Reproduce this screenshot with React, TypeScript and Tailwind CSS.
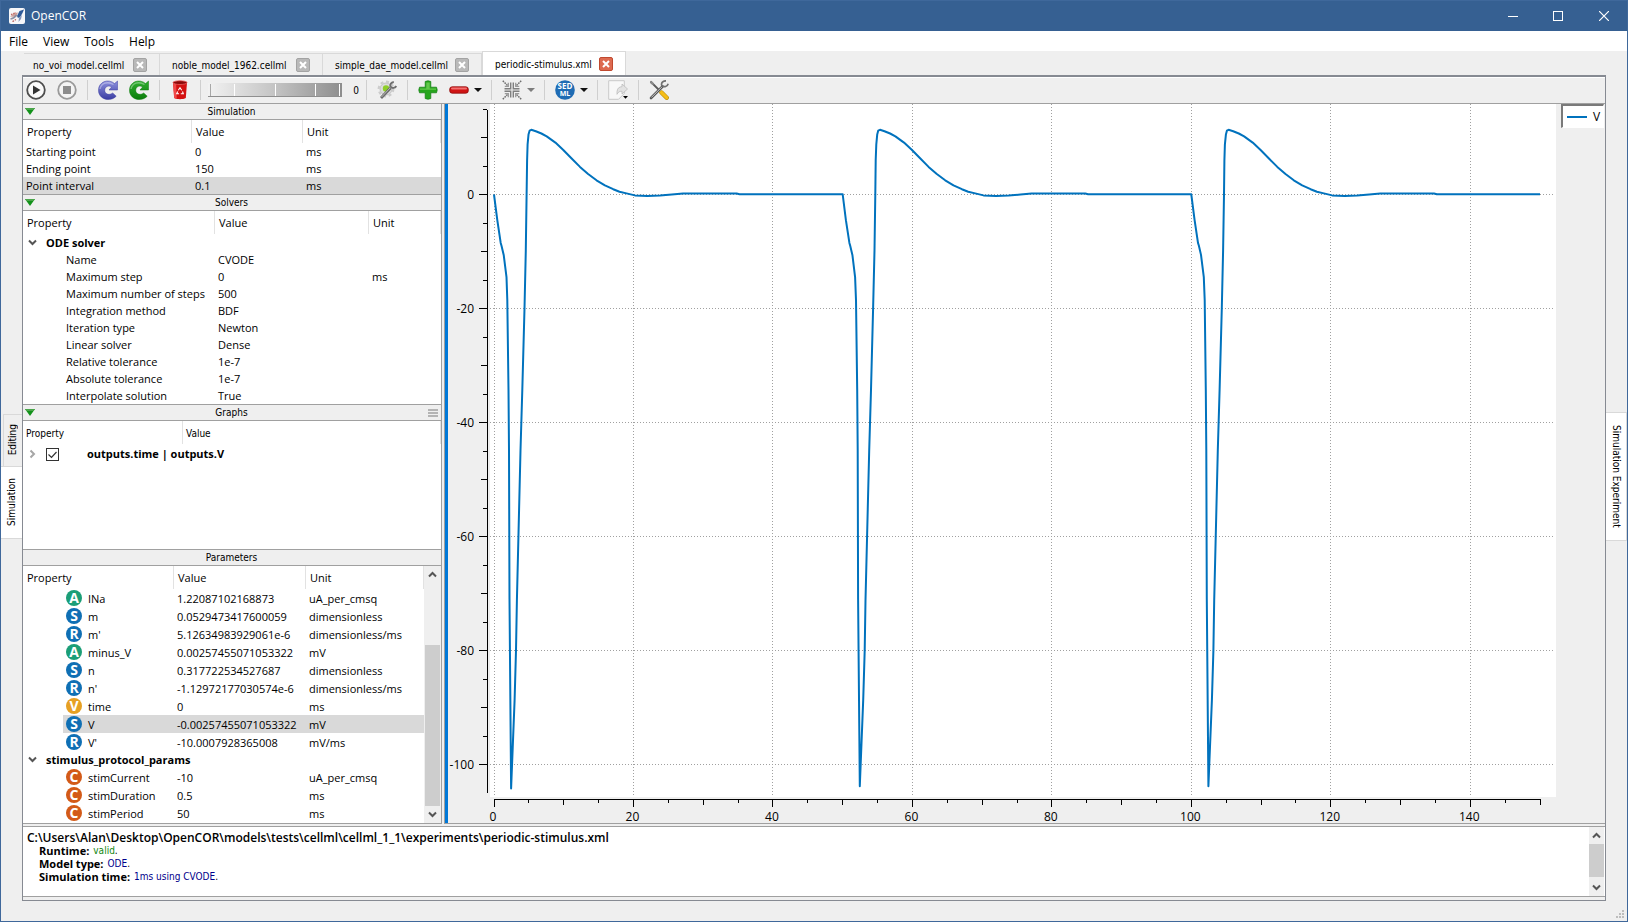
import { useLayoutEffect, useRef, useState } from "react";
import type { ReactNode } from "react";

/* ------------------------------------------------------------------ icons */

const AppIcon = () => (
  <svg className="size-4" viewBox="0 0 16 16" aria-hidden="true">
    <rect width="16" height="16" rx="2" fill="#f7f7f9" />
    <path d="M1 8.500c2.500-2.500 4.500-3.500 8-4L7 9z" fill="#cfa09b" />
    <path d="M1.500 11c2.500-.5 4.500-1.500 6-4" stroke="#8b8fa3" strokeWidth="1.600" fill="none" />
    <path d="M3.500 13.500c1.500-.5 2.500-1.200 3.500-2.300M2 6.500l5-2" stroke="#b7524c" strokeWidth="1.200" strokeDasharray="1.500 1" fill="none" />
    <path d="M15 1.500L10.500 3 8 8l1 2 2.500-1.500L13.500 5z" fill="#2f5a98" />
    <path d="M10 9.500l-.5 4.500 2.500-3 1-4z" fill="#8496bd" />
  </svg>
);

const PlayIcon = () => (
  <svg className="size-5 shrink-0" viewBox="0 0 20 20" aria-hidden="true">
    <circle cx="10" cy="10" r="8.800" fill="#fafafa" stroke="#4e4e4e" strokeWidth="1.800" />
    <path d="M7 5.500v9l7.500-4.500z" fill="#333" />
  </svg>
);

const StopIcon = () => (
  <svg className="size-5 shrink-0" viewBox="0 0 20 20" aria-hidden="true">
    <circle cx="10" cy="10" r="8.800" fill="#f4f4f4" stroke="#9a9a9a" strokeWidth="1.800" />
    <rect x="6" y="6" width="8" height="8" fill="#8c8c8c" />
  </svg>
);

const ReloadIcon = ({ light, dark, id }: { light: string; dark: string; id: string }) => (
  <svg className="size-5 shrink-0" viewBox="0 0 20 20" aria-hidden="true">
    <defs>
      <linearGradient id={id} x1="0" y1="0" x2="0" y2="1">
        <stop offset="0" stopColor={light} />
        <stop offset="1" stopColor={dark} />
      </linearGradient>
    </defs>
    <path
      d="M19.500 1v9h-8.500l2.600-3C10.500 4.800 6.700 6.700 6.700 10.200c0 3.800 4.600 5.600 8 2.800l3.500 3.200C12.500 22.300.5 19.700.5 10.200.5 1.500 10.500-1.800 16.600 3.600z"
      fill={`url(#${id})`}
      stroke={dark}
      strokeWidth=".5"
    />
    <path d="M2 9C3 3 10 .8 15.500 4.500" stroke="#fff" strokeOpacity=".35" strokeWidth="1.500" fill="none" />
  </svg>
);

const TrashIcon = () => (
  <svg className="size-5 shrink-0" viewBox="0 0 20 20" aria-hidden="true">
    <path d="M3 2.500h14l-1.200 15.500c-2.500 1.600-9.100 1.600-11.600 0z" fill="#d41111" />
    <path d="M3 2.500h3l.8 16.300c-1-.1-2-.4-2.600-.8z" fill="#f04848" />
    <ellipse cx="10" cy="2.600" rx="7" ry="1.900" fill="#8c0a0a" stroke="#f06060" strokeWidth=".8" />
    <path d="M8.300 10.200L10 7.800l1.700 2.400M12.500 11.500l.8 2.300h-2.500M9 13.800H6.700l1-2.300" stroke="#fff" strokeWidth="1.100" fill="none" />
  </svg>
);

const GearWrenchIcon = () => (
  <svg className="size-5 shrink-0" viewBox="0 0 20 20" aria-hidden="true">
    <circle cx="9" cy="9" r="6" fill="#dcdcdc" stroke="#c4c4c4" />
    <circle cx="9" cy="9" r="7.300" fill="none" stroke="#cccccc" strokeWidth="2.200" strokeDasharray="3 2.700" />
    <circle cx="9" cy="8.500" r="3.200" fill="#8fce2a" />
    <path d="M4 18L13.500 8" stroke="#6b6b6b" strokeWidth="2.800" />
    <path d="M4.500 17L13 8" stroke="#b5b5b5" strokeWidth="1" />
    <path d="M16.800 2c-2.700.3-4 2.300-3.300 4.700 1.800 1.900 4.500 1.500 5.800-.6" stroke="#6e6e6e" strokeWidth="1.900" fill="none" />
  </svg>
);

const PlusIcon = () => (
  <svg className="size-5 shrink-0" viewBox="0 0 20 20" aria-hidden="true">
    <path d="M7.200 1.500q2.800-1.500 5.600 0v5.700h5.700q1.500 2.800 0 5.600h-5.700v5.700q-2.800 1.500-5.600 0v-5.700H1.500q-1.500-2.800 0-5.600h5.700z" fill="#27a51d" stroke="#0e7d0e" strokeWidth=".7" />
    <path d="M8.300 2.400h3.400v6H18v1.400H2V8.400h6.300z" fill="#8be06b" fillOpacity=".6" />
  </svg>
);

const MinusIcon = () => (
  <svg className="size-5 shrink-0" viewBox="0 0 20 20" aria-hidden="true">
    <rect x=".7" y="6.800" width="18.600" height="6.400" rx="2.500" fill="#d01414" stroke="#8f0d0d" strokeWidth=".8" />
    <rect x="2" y="7.600" width="16" height="2" rx="1" fill="#ff8f8f" fillOpacity=".75" />
  </svg>
);

const CollapseIcon = () => (
  <svg className="size-5 shrink-0" viewBox="0 0 20 20" aria-hidden="true">
    <path d="M.8.8l5.400 5.400M19.200.8l-5.400 5.400M.8 19.200l5.400-5.400M19.200 19.200l-5.400-5.400" stroke="#6f6f6f" strokeWidth="1.500" strokeDasharray="1.600 .9" />
    <path d="M8.700 2.500v6.200h-6.200M11.300 2.500v6.200h6.200M8.700 17.500v-6.200h-6.200M11.300 17.500v-6.200h6.200" fill="none" stroke="#7f7f7f" strokeWidth="1.400" />
    <path d="M6.300 2.800v3.500H2.800M13.700 2.800v3.500h3.500M6.300 17.200v-3.500H2.800M13.700 17.200v-3.500h3.500" fill="none" stroke="#9a9a9a" strokeWidth="1.300" />
  </svg>
);

const ExportIcon = () => (
  <svg className="size-5 shrink-0" viewBox="0 0 20 20" aria-hidden="true">
    <path d="M.7.700h15.600v12.800l-5.800 5.800H.7z" fill="#f8f8f8" stroke="#c9c9c9" />
    <path d="M9 11.500c.4-3.500 2.500-4.800 5-4.800V4l5.500 5-5.500 5v-2.700c-2.500-.1-3.500.4-5 3z" fill="#e2e2e2" stroke="#bdbdbd" strokeWidth=".8" />
    <path d="M15 16h5l-2.500 2.800z" fill="#000" />
  </svg>
);

const ToolsIcon = () => (
  <svg className="size-5 shrink-0" viewBox="0 0 20 20" aria-hidden="true">
    <path d="M1.500 1.500l9 9" stroke="#5a5a5a" strokeWidth="1.800" />
    <path d="M1 .8l3 1.200 1 2.500L3.500 5 1.500 3.500z" fill="#8b8b8b" />
    <path d="M12.500 12.500l5.200 5.200" stroke="#b98a00" strokeWidth="4.400" strokeLinecap="round" />
    <path d="M12.500 12.500l5.200 5.200" stroke="#f5bd18" strokeWidth="3.200" strokeLinecap="round" />
    <path d="M2 18L13.500 6.500" stroke="#555" strokeWidth="2.600" strokeLinecap="round" />
    <path d="M2.300 17.500L13 6.800" stroke="#c9c9c9" strokeWidth="1" />
    <path d="M17 .8c-3 0-5.200 2-4.200 4.900 2.300 1.900 5.600 1 6.400-2" stroke="#707070" strokeWidth="1.700" fill="none" />
  </svg>
);

const DropArrow = ({ muted = false }: { muted?: boolean }) => (
  <svg className="h-1 w-2 shrink-0" viewBox="0 0 8 4" aria-hidden="true">
    <path d="M0 0h8L4 4z" fill={muted ? "#7d7d7d" : "#111"} />
  </svg>
);

const Chevron = ({ path, color = "#555" }: { path: string; color?: string }) => (
  <svg className="size-[10px] shrink-0" viewBox="0 0 10 10" aria-hidden="true">
    <path d={path} fill="none" stroke={color} strokeWidth="2" />
  </svg>
);
const DOWN = "M1 2.500l3.500 3.500L8 2.500";
const UP = "M1 6.500L4.500 3 8 6.500";
const RIGHT = "M2.500 1.500L6 5 2.500 8.500";

const SMALL = "font-['DejaVu_Sans_Condensed','DejaVu_Sans',sans-serif] text-[10px]";

/* ------------------------------------------------------------- title/menu */

function TitleBar() {
  return (
    <header className="flex h-[30px] shrink-0 items-center bg-[#366092] pl-2 text-white">
      <AppIcon />
      <h1 className="ml-[6px] flex-1 text-[12px] leading-4">OpenCOR</h1>
      <button aria-label="Minimise" className="flex h-full w-[45px] items-center justify-center">
        <svg className="size-[10px]" viewBox="0 0 10 10"><path d="M0 5.500h10" stroke="#fff" /></svg>
      </button>
      <button aria-label="Maximise" className="flex h-full w-[46px] items-center justify-center">
        <svg className="size-[10px]" viewBox="0 0 10 10"><rect x=".5" y=".5" width="9" height="9" fill="none" stroke="#fff" /></svg>
      </button>
      <button aria-label="Close" className="flex h-full w-[46px] items-center justify-center">
        <svg className="size-[10px]" viewBox="0 0 10 10"><path d="M0 0l10 10M10 0L0 10" stroke="#fff" strokeWidth="1.200" /></svg>
      </button>
    </header>
  );
}

function MenuBar() {
  return (
    <nav className="flex h-5 shrink-0 items-end gap-[15px] bg-white pb-px pl-2 text-[12px]">
      {["File", "View", "Tools", "Help"].map((m) => (
        <button key={m} className="leading-4">{m}</button>
      ))}
    </nav>
  );
}

const FILES = [
  { name: "no_voi_model.cellml", width: "w-[136px] pl-[9px]" },
  { name: "noble_model_1962.cellml", width: "w-[163px] pl-3" },
  { name: "simple_dae_model.cellml", width: "w-[159px] pl-3" },
  { name: "periodic-stimulus.xml", width: "w-[144px] pl-3", active: true },
];

function FileTabs() {
  return (
    <div className="flex h-6 shrink-0 items-end pl-[2px]">
      {FILES.map((f) => (
        <div
          key={f.name}
          className={`flex items-center justify-between border-t border-r border-[#d9d9d9] pr-3 ${f.width} ${
            f.active ? "h-6 border-l bg-white" : "h-[22px]"
          }`}
        >
          <button className={`${SMALL} pt-[2px] leading-4 text-black`}>{f.name}</button>
          <button
            aria-label={`Close ${f.name}`}
            className={`flex size-[14px] items-center justify-center rounded-[2px] border ${
              f.active ? "border-[#c0492f] bg-[#dd6a50]" : "border-[#a3a3a3] bg-[#b9b9b9]"
            }`}
          >
            <svg className="size-2" viewBox="0 0 8 8"><path d="M1 1l6 6M7 1L1 7" stroke="#fff" strokeWidth="2" /></svg>
          </button>
        </div>
      ))}
    </div>
  );
}

/* ---------------------------------------------------------------- toolbar */

const ToolSep = () => (
  <span className="flex h-5 w-[5px] justify-center"><span className="w-px bg-[#cfcfcf]" /></span>
);

function ToolButton({ label, arrow, muted, children }: { label: string; arrow?: boolean; muted?: boolean; children: ReactNode }) {
  return (
    <button
      aria-label={label}
      className={`flex h-6 shrink-0 items-center ${arrow ? "w-[38px] justify-start gap-[5px] pl-[3px]" : "w-[26px] justify-center"}`}
    >
      {children}
      {arrow && <DropArrow muted={muted} />}
    </button>
  );
}

function DelayWheel() {
  return (
    <div className="relative flex h-[14px] w-[134px] justify-between border-b border-[#8f8f8f] bg-linear-to-r from-[#f2f2f2] via-[#c4c4c4] to-[#8e8e8e] px-[2px] pt-[1px]">
      <span className="w-px bg-[#a8a8a8]" />
      <span className="mr-4 w-px bg-white" />
      <span className="w-px bg-white" />
      <span className="ml-4 w-px bg-white" />
      <span className="w-px bg-white" />
      <input aria-label="Delay" type="range" min={0} max={50} defaultValue={0} className="absolute inset-0 size-full opacity-0" />
    </div>
  );
}

function Toolbar() {
  return (
    <div role="toolbar" className="flex h-[27px] shrink-0 items-center gap-[5px] border-t border-b border-t-white border-b-[#a0a0a0] pb-px">
      <ToolButton label="Run"><PlayIcon /></ToolButton>
      <ToolButton label="Stop"><StopIcon /></ToolButton>
      <ToolSep />
      <ToolButton label="Reset parameters"><ReloadIcon id="rb" light="#8d90de" dark="#3a3da2" /></ToolButton>
      <ToolButton label="Clear simulation"><ReloadIcon id="rg" light="#2fae2f" dark="#0b7d0b" /></ToolButton>
      <ToolSep />
      <ToolButton label="Delete results"><TrashIcon /></ToolButton>
      <ToolSep />
      <DelayWheel />
      <output className={`${SMALL} w-3 pt-px text-right leading-4`}>0</output>
      <ToolSep />
      <ToolButton label="Development mode"><GearWrenchIcon /></ToolButton>
      <ToolSep />
      <ToolButton label="Add graph panel"><PlusIcon /></ToolButton>
      <ToolButton label="Remove graph panel" arrow><MinusIcon /></ToolButton>
      <ToolSep />
      <ToolButton label="Reset sizes" arrow muted><CollapseIcon /></ToolButton>
      <ToolSep />
      <ToolButton label="SED-ML export" arrow>
        <svg className="size-5 shrink-0 font-['Open_Sans',sans-serif] text-[8px] font-bold" viewBox="0 0 20 20" aria-hidden="true">
          <circle cx="10" cy="10" r="9.800" fill="#1f6cb4" />
          <text x="10" y="9" textAnchor="middle" fill="#fff">SED</text>
          <text x="10" y="16" textAnchor="middle" fill="#fff" fontSize="7">ML</text>
        </svg>
      </ToolButton>
      <ToolSep />
      <ToolButton label="Export data"><ExportIcon /></ToolButton>
      <ToolSep />
      <ToolButton label="Preferences"><ToolsIcon /></ToolButton>
    </div>
  );
}

/* ----------------------------------------------------------- left sidebar */

function PanelHeader({ title, collapsible = true, menu = false }: { title: string; collapsible?: boolean; menu?: boolean }) {
  return (
    <div className="flex h-4 shrink-0 items-center border-b border-[#a0a0a0] pr-[3px] pl-[2px]">
      <span className="flex w-4">
        {collapsible && (
          <button aria-label={`Collapse ${title}`}>
            <svg className="h-[7px] w-[10px]" viewBox="0 0 10 7"><path d="M0 0h10L5 7z" fill="#12921a" /><path d="M0 0h10L8.500 2H1.500z" fill="#4aa54a" /></svg>
          </button>
        )}
      </span>
      <h2 className={`${SMALL} flex-1 pt-px text-center leading-[14px]`}>{title}</h2>
      <span className="flex w-4 justify-end">
        {menu && (
          <button aria-label="Graphs menu" className="flex w-[10px] flex-col gap-px">
            <span className="h-[2px] bg-[#b4b4b4]" /><span className="h-[2px] bg-[#b4b4b4]" /><span className="h-[2px] bg-[#b4b4b4]" />
          </button>
        )}
      </span>
    </div>
  );
}

function HeadRow({ labels, small = false }: { labels: string[]; small?: boolean }) {
  return (
    <thead>
      <tr className="h-[23px]">
        {labels.map((l) => (
          <th key={l} className={`border-r border-[#e2e2e2] p-0 text-left font-normal ${small ? `${SMALL} pt-[2px] pl-[3px]` : "pl-1"}`}>{l}</th>
        ))}
      </tr>
    </thead>
  );
}

function SimulationPanel() {
  const rows = [
    ["Starting point", "0", "ms"],
    ["Ending point", "150", "ms"],
    ["Point interval", "0.1", "ms"],
  ];
  return (
    <section>
      <PanelHeader title="Simulation" />
      <table className="w-full table-fixed border-separate border-spacing-0 bg-white leading-4">
        <colgroup><col className="w-[169px]" /><col className="w-[111px]" /><col /></colgroup>
        <HeadRow labels={["Property", "Value", "Unit"]} />
        <tbody>
          {rows.map((r, i) => (
            <tr key={r[0]} className={`h-[17px] ${i === 2 ? "bg-[#d9d9d9]" : ""}`}>
              {r.map((c, j) => <td key={j} className="p-0 pl-[3px]">{c}</td>)}
            </tr>
          ))}
        </tbody>
      </table>
    </section>
  );
}

function SolversPanel() {
  const rows = [
    ["Name", "CVODE", ""],
    ["Maximum step", "0", "ms"],
    ["Maximum number of steps", "500", ""],
    ["Integration method", "BDF", ""],
    ["Iteration type", "Newton", ""],
    ["Linear solver", "Dense", ""],
    ["Relative tolerance", "1e-7", ""],
    ["Absolute tolerance", "1e-7", ""],
    ["Interpolate solution", "True", ""],
  ];
  return (
    <section className="border-t border-[#a0a0a0]">
      <PanelHeader title="Solvers" />
      <table className="w-full table-fixed border-separate border-spacing-0 bg-white leading-4">
        <colgroup><col className="w-[192px]" /><col className="w-[154px]" /><col /></colgroup>
        <HeadRow labels={["Property", "Value", "Unit"]} />
        <tbody>
          <tr className="h-[17px]">
            <td colSpan={3} className="p-0">
              <div className="flex items-center gap-2 pl-[5px]"><Chevron path={DOWN} /><b>ODE solver</b></div>
            </td>
          </tr>
          {rows.map((r) => (
            <tr key={r[0]} className="h-[17px]">
              <td className="p-0 pl-[43px] whitespace-nowrap">{r[0]}</td>
              <td className="p-0 pl-[3px]">{r[1]}</td>
              <td className="p-0 pl-[3px]">{r[2]}</td>
            </tr>
          ))}
        </tbody>
      </table>
    </section>
  );
}

function GraphsPanel() {
  return (
    <section className="border-t border-[#a0a0a0]">
      <PanelHeader title="Graphs" menu />
      <div className="h-32 bg-white">
        <table className="w-full table-fixed border-separate border-spacing-0 leading-4">
          <colgroup><col className="w-[160px]" /><col /></colgroup>
          <HeadRow labels={["Property", "Value"]} small />
          <tbody>
            <tr className="h-5">
              <td colSpan={2} className="p-0">
                <label className="flex items-center pl-[5px]">
                  <Chevron path={RIGHT} color="#a6a6a6" />
                  <span className="relative ml-2 flex size-[13px]">
                    <input type="checkbox" defaultChecked className="peer size-[13px] appearance-none border border-[#333] bg-white" />
                    <svg className="pointer-events-none absolute inset-0 hidden size-[13px] peer-checked:block" viewBox="0 0 13 13">
                      <path d="M2.500 6.500l3 3 5-5.500" fill="none" stroke="#333" strokeWidth="1.200" />
                    </svg>
                  </span>
                  <b className="ml-7">outputs.time | outputs.V</b>
                </label>
              </td>
            </tr>
          </tbody>
        </table>
      </div>
    </section>
  );
}

const BADGE: Record<string, string> = {
  A: "bg-[#1b9e77]",
  S: "bg-[#0f6fb4]",
  R: "bg-[#0f6fb4]",
  V: "bg-[#e6a023]",
  C: "bg-[#d35a17]",
};

const PARAMS: [string, string, string, string][] = [
  ["A", "INa", "1.22087102168873", "uA_per_cmsq"],
  ["S", "m", "0.0529473417600059", "dimensionless"],
  ["R", "m'", "5.12634983929061e-6", "dimensionless/ms"],
  ["A", "minus_V", "0.00257455071053322", "mV"],
  ["S", "n", "0.317722534527687", "dimensionless"],
  ["R", "n'", "-1.12972177030574e-6", "dimensionless/ms"],
  ["V", "time", "0", "ms"],
  ["S", "V", "-0.00257455071053322", "mV"],
  ["R", "V'", "-10.0007928365008", "mV/ms"],
];
const STIMULUS: [string, string, string, string][] = [
  ["C", "stimCurrent", "-10", "uA_per_cmsq"],
  ["C", "stimDuration", "0.5", "ms"],
  ["C", "stimPeriod", "50", "ms"],
];

function ParamRow({ row: [kind, name, value, unit] }: { row: [string, string, string, string] }) {
  const bg = name === "V" ? "bg-[#d9d9d9]" : "";
  return (
    <tr className="h-[18px]">
      <td className="p-0">
        <div className={`ml-10 flex h-[18px] items-center gap-[6px] pl-[3px] ${bg}`}>
          <span className={`flex size-4 items-center justify-center rounded-full text-[14px] leading-4 font-bold text-white ${BADGE[kind]}`}>{kind}</span>
          <span className="pt-px">{name}</span>
        </div>
      </td>
      <td className={`p-0 pt-px pl-[3px] ${bg}`}>{value}</td>
      <td className={`p-0 pt-px pl-[3px] ${bg}`}>{unit}</td>
    </tr>
  );
}

function ParametersPanel() {
  return (
    <section className="flex min-h-0 flex-1 flex-col border-t border-[#a0a0a0]">
      <PanelHeader title="Parameters" collapsible={false} />
      <div className="flex min-h-0 flex-1 border-b border-[#a0a0a0] bg-white">
        <div className="min-w-0 flex-1 overflow-hidden">
          <table className="w-full table-fixed border-separate border-spacing-0 leading-4">
            <colgroup><col className="w-[151px]" /><col className="w-[132px]" /><col /></colgroup>
            <HeadRow labels={["Property", "Value", "Unit"]} />
            <tbody>
              {PARAMS.map((r) => <ParamRow key={r[1]} row={r} />)}
              <tr className="h-[17px]">
                <td colSpan={3} className="p-0">
                  <div className="flex items-center gap-2 pl-[5px]"><Chevron path={DOWN} /><b>stimulus_protocol_params</b></div>
                </td>
              </tr>
              {STIMULUS.map((r) => <ParamRow key={r[1]} row={r} />)}
            </tbody>
          </table>
        </div>
        <div className="flex w-[17px] flex-col items-center bg-[#efefef]">
          <button aria-label="Scroll up" className="flex h-[17px] items-center"><Chevron path={UP} /></button>
          <div className="flex w-[15px] flex-1 flex-col pt-[62px]"><div className="flex-1 bg-[#cdcdcd]" /></div>
          <button aria-label="Scroll down" className="flex h-[17px] items-center"><Chevron path={DOWN} /></button>
        </div>
      </div>
    </section>
  );
}

/* ------------------------------------------------------------------- plot */

const BEAT: [number, number][] = [
  [0, 0], [0.47, -4.5], [0.96, -8.5], [1.08, -9], [1.39, -10.6], [1.79, -14.5], [1.91, -18.5], [2.08, -34.3], [2.15, -44.9],
  [2.22, -71], [2.45, -104.2], [2.95, -88.7], [3.16, -80], [3.28, -71.2], [3.8, -44.9], [4.06, -34.3], [4.37, -20],
  [4.56, -9.8], [4.68, 0], [4.74, 6], [4.82, 8.8], [4.95, 10.5], [5.1, 11.2], [5.35, 11.35], [6, 11.1], [6.8, 10.7], [7.56, 10.2],
  [8.8, 9.1], [9.94, 7.8], [11.1, 6.35], [12.33, 4.85], [13.5, 3.6], [14.7, 2.5], [15.9, 1.6], [17.1, 0.93], [18, 0.5],
  [19, 0.2], [20.2, -0.15], [22, -0.25], [23.8, -0.2], [25.5, 0], [27.1, 0.17], [34.8, 0.17], [35.2, 0.05], [50, 0.05],
];
const steps = (from: number, to: number, by: number) =>
  Array.from({ length: Math.floor((to - from) / by) + 1 }, (_, i) => from + i * by);

function Plot() {
  const box = useRef<HTMLDivElement>(null);
  const [{ w, h }, setSize] = useState({ w: 1157, h: 719 });
  useLayoutEffect(() => {
    const el = box.current;
    if (!el) return;
    const measure = () => setSize({ w: el.clientWidth, h: el.clientHeight });
    measure();
    const ro = new ResizeObserver(measure);
    ro.observe(el);
    return () => ro.disconnect();
  }, []);

  const left = 42;
  const right = w - 49;
  const bottom = h - 26;
  const px = (t: number) => 46 + (t / 150) * (w - 111);
  const py = (v: number) => 5 + ((15 - v) / 120) * (h - 35);
  const snap = (n: number) => Math.floor(n) + 0.5;
  const tick = (n: number) => (n % 20 === 0 ? 8 : n % 10 === 0 ? 6 : 4);
  const points = [0, 50, 100]
    .flatMap((start) => BEAT.map(([t, v]) => `${px(start + t).toFixed(1)},${py(start && v < -100 ? -103.8 : v).toFixed(1)}`))
    .join(" ");

  return (
    <div ref={box} className="relative min-w-0 flex-1 overflow-hidden">
      <svg className="absolute inset-0 size-full font-['Open_Sans',sans-serif] text-[12px]" role="img" aria-label="V against time">
        <rect x={left} y={0} width={right - left} height={bottom} fill="#fff" />
        <g stroke="#a0a0a0" strokeDasharray="1 2" shapeRendering="crispEdges">
          {steps(0, 140, 20).map((t) => <path key={t} d={`M${snap(px(t))} 0V${bottom}`} />)}
          {steps(-100, 0, 20).map((v) => <path key={v} d={`M${left} ${snap(py(v))}H${right - 2}`} />)}
        </g>
        <g stroke="#000" shapeRendering="crispEdges">
          <path d={`M39.5 ${snap(py(15))}V${py(-105)}`} />
          {steps(-100, 15, 5).map((v) => <path key={v} d={`M39 ${snap(py(v))}h${-tick(v)}`} />)}
          <path d={`M${snap(px(0))} ${h - 24 + 0.5}H${snap(px(150))}`} />
          {steps(0, 150, 5).map((t) => <path key={t} d={`M${snap(px(t))} ${h - 24}v${tick(t)}`} />)}
        </g>
        {steps(-100, 0, 20).map((v) => <text key={v} x={26} y={py(v) + 4} textAnchor="end">{v}</text>)}
        {steps(0, 140, 20).map((t) => <text key={t} x={px(t) - 1} y={h - 2} textAnchor="middle">{t}</text>)}
        <polyline points={points} fill="none" stroke="#0072bd" strokeWidth="2" strokeLinejoin="round" />
      </svg>
      <div className="absolute top-0 right-px flex h-6 w-[43px] items-center gap-[6px] border-t-2 border-r border-b border-l-2 border-t-[#7a7a7a] border-r-white border-b-white border-l-[#7a7a7a] bg-white pl-1">
        <span className="h-[2px] w-5 bg-[#0072bd]" />
        <span className="text-[12px] leading-4">V</span>
      </div>
    </div>
  );
}

/* ---------------------------------------------------------------- message */

function MessagePanel() {
  return (
    <section className="mt-[2px] mb-[3px] flex h-[71px] shrink-0 border-t border-b border-[#a0a0a0] bg-white">
      <div className={`flex-1 pt-1 pl-1 leading-[13px] ${SMALL}`}>
        <p className="font-['Open_Sans',sans-serif] text-[12px] leading-[13px] font-semibold">
          C:\Users\Alan\Desktop\OpenCOR\models\tests\cellml\cellml_1_1\experiments\periodic-stimulus.xml
        </p>
        <dl className="pl-3 leading-[13px]">
          {[
            ["Runtime:", "valid", "text-[#118811]"],
            ["Model type:", "ODE", "text-[#00008b]"],
            ["Simulation time:", "1ms using CVODE", "text-[#00008b]"],
          ].map(([k, v, c]) => (
            <div key={k} className="flex gap-1">
              <dt className="font-['Open_Sans',sans-serif] text-[11px] leading-[13px] font-bold">{k}</dt>
              <dd><span className={c}>{v}</span>.</dd>
            </div>
          ))}
        </dl>
      </div>
      <div className="mr-px flex w-[15px] flex-col items-center bg-[#efefef]">
        <button aria-label="Scroll up" className="flex h-[17px] items-center"><Chevron path={UP} /></button>
        <div className="flex w-full flex-1"><div className="h-[33px] flex-1 bg-[#cdcdcd]" /></div>
        <button aria-label="Scroll down" className="flex h-4 items-center"><Chevron path={DOWN} /></button>
      </div>
    </section>
  );
}

/* -------------------------------------------------------------------- app */

export default function App() {
  return (
    <div className="flex h-screen flex-col overflow-hidden border border-[#3f689b] bg-[#efefef] font-['Open_Sans',sans-serif] text-[11px] text-black">
      <TitleBar />
      <MenuBar />
      <div className="flex min-h-0 flex-1">
        <nav className="flex w-[21px] shrink-0 flex-col justify-center">
          <button className={`${SMALL} ml-[2px] flex h-[52px] items-center justify-center border-t border-l border-[#d9d9d9]`}>
            <span className="rotate-180 leading-4 [writing-mode:vertical-rl]">Editing</span>
          </button>
          <button className={`${SMALL} flex h-[73px] items-center justify-center border-y border-[#d9d9d9] bg-white pl-px`}>
            <span className="rotate-180 leading-4 [writing-mode:vertical-rl]">Simulation</span>
          </button>
        </nav>
        <main className="flex min-w-0 flex-1 flex-col">
          <FileTabs />
          <div className="flex min-h-0 flex-1 flex-col border border-t-2 border-[#868a92]">
            <Toolbar />
            <div className="flex min-h-0 flex-1">
              <aside className="flex w-[419px] shrink-0 flex-col border-r border-[#a0a0a0]">
                <SimulationPanel />
                <SolversPanel />
                <GraphsPanel />
                <ParametersPanel />
              </aside>
              <div className="ml-[2px] flex min-w-0 flex-1 border-b border-l border-[#a0a0a0]">
                <div className="w-[3px] shrink-0 bg-[#0078d7]" />
                <Plot />
              </div>
            </div>
            <MessagePanel />
          </div>
        </main>
        <nav className="flex w-[21px] shrink-0 flex-col justify-center">
          <button className={`${SMALL} flex h-[129px] items-center justify-center border border-l-0 border-[#d9d9d9] bg-white`}>
            <span className="leading-4 [writing-mode:vertical-rl]">Simulation Experiment</span>
          </button>
        </nav>
      </div>
      <footer className="flex h-5 shrink-0 items-end justify-end p-[3px]">
        <svg className="size-2" viewBox="0 0 8 8" fill="#bdbdbd" aria-hidden="true">
          <path d="M6 0h2v2H6zM3 3h2v2H3zM6 3h2v2H6zM0 6h2v2H0zM3 6h2v2H3zM6 6h2v2H6z" />
        </svg>
      </footer>
    </div>
  );
}
